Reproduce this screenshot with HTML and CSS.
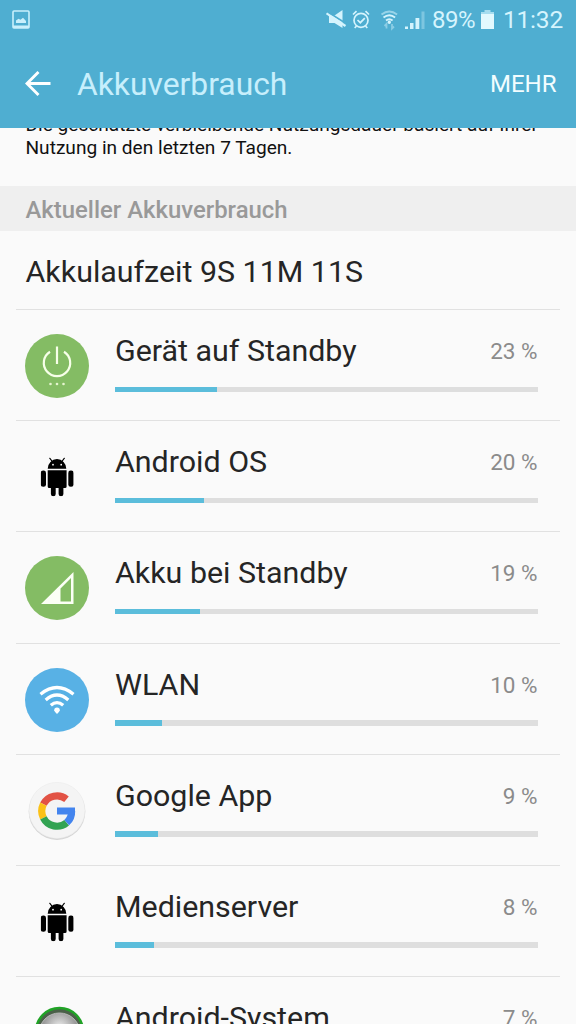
FILE: index.html
```html
<!DOCTYPE html>
<html lang="de">
<head>
<meta charset="utf-8">
<title>Akkuverbrauch</title>
<link rel="stylesheet" href="styles.css">
</head>
<body>
<svg class="defs" width="0" height="0" aria-hidden="true">
  <symbol id="android" viewBox="0 0 33 39">
    <path d="M7 11.2a9.3 9.6 0 0 1 18.6 0zM7 12.7h18.9V29q0 1.6-1.6 1.6h-1.6v5.8a2.4 2.4 0 0 1-4.8 0v-5.8H15v5.8a2.4 2.4 0 0 1-4.8 0v-5.8H8.5Q7 30.600 7 29z"/>
    <rect x="0" y="13" width="5.300" height="16.300" rx="2.400"/>
    <rect x="27.600" y="13" width="5.300" height="16.300" rx="2.400"/>
    <path d="M9 .6l3 4M23.700 .6l-3 4" stroke="#000" stroke-width="1.100" stroke-linecap="round"/>
    <circle cx="12.300" cy="7.200" r=".9" fill="#fafafa"/><circle cx="20.500" cy="7.200" r=".9" fill="#fafafa"/>
  </symbol>
</svg>
<div class="screen">
  <header class="header">
    <div class="status">
      <svg class="shot" width="18" height="19" viewBox="0 0 18 19"><rect x="1" y="1" width="16" height="17" rx="1" fill="none" stroke="#c9f0fc" stroke-width="1.600"/><path d="M1 15.500h16v2.500H1zM4 13v-2.500l2.500-1.800 2 1 2.500-2 3 3.300v2z" fill="#c9f0fc"/></svg>
      <svg class="indicators" width="100" height="22" viewBox="0 0 100 22">
        <g fill="#d5f4fd" stroke="#d5f4fd">
          <path d="M3 6.500h5.500l8-5.500v18L8.500 14H3z" stroke="none"/>
          <path d="M1 2.500L20 14.500" stroke="#4faed1" stroke-width="1.600"/>
          <path d="M.5 4.300L19.500 17" stroke-width="2.200"/>
        </g>
        <g fill="none" stroke="#d5f4fd" stroke-width="1.700">
          <circle cx="35" cy="11.300" r="7"/><path d="M31.500 11l2.800 2.700 4.500-4.500M27 5.500l3.500-3.300M43 5.500l-3.500-3.300M30.500 17l-1.800 2M39.500 17l1.800 2"/>
        </g>
        <g fill="none" stroke="#d5f4fd" stroke-width="1.800">
          <path d="M55.500 5.500q7.800-6 15.600 0" opacity=".55"/><path d="M57.500 8.500q5.800-4.600 11.600 0M60 11.500q3.300-2.600 6.600 0"/>
          <circle cx="63.300" cy="13.300" r=".8" fill="#d5f4fd"/>
          <path d="M60.500 19.500v-4.500l-2 2M66 15v4.500l2-2" opacity=".45"/>
        </g>
        <g fill="#d5f4fd"><path d="M79 17.500h3v2.500h-3zM84 14h3.500v6h-3.500zM89.500 9h3.800v11h-3.800z"/><path d="M95.500 2.500h3V20h-3z" opacity=".35"/></g>
      </svg>
      <span class="level">89%</span>
      <svg class="battery" width="13" height="19" viewBox="0 0 13 19"><path d="M3.500 0h6v2H13v17H0V2h3.500z" fill="#a7ddef"/><path d="M0 4h13v15H0z" fill="#e3f9fe"/></svg>
      <span class="clock">11:32</span>
    </div>
    <div class="bar">
      <svg class="back" width="26" height="26" viewBox="0 0 26 26"><path d="M25.500 12.500H2M13.500 1L2 12.500l11.500 11.500" fill="none" stroke="#fff" stroke-width="2.900"/></svg>
      <h1 class="title">Akkuverbrauch</h1>
      <span class="more">MEHR</span>
    </div>
  </header>
  <main class="content">
    <div class="note"><p class="note-text">Die geschätzte verbleibende Nutzungsdauer basiert auf Ihrer<br>Nutzung in den letzten 7 Tagen.</p></div>
    <h2 class="section">Aktueller Akkuverbrauch</h2>
    <div class="runtime"><span>Akkulaufzeit 9S 11M 11S</span></div>
    <ul class="list">
      <li class="row">
        <svg class="icon" viewBox="0 0 64 64"><circle cx="32" cy="32" r="32" fill="#84bc64"/><path d="M25 17.700a13.200 13.200 0 1 0 14 0M32 12.500v17.500" fill="none" stroke="#f7ffe9" stroke-width="2.200"/><g fill="#e5f5cf"><circle cx="25.500" cy="50" r="1.300"/><circle cx="32" cy="50" r="1.300"/><circle cx="38.500" cy="50" r="1.300"/></g></svg>
        <div class="info"><div class="line"><span class="name">Gerät auf Standby</span><span class="pct">23 %</span></div><div class="track"><div class="fill" style="width:24.100%"></div></div></div>
      </li>
      <li class="row">
        <svg class="icon" viewBox="0 0 64 64"><use href="#android" x="15.700" y="12.500" width="33" height="39"/></svg>
        <div class="info"><div class="line"><span class="name">Android OS</span><span class="pct">20 %</span></div><div class="track"><div class="fill" style="width:21.100%"></div></div></div>
      </li>
      <li class="row">
        <svg class="icon" viewBox="0 0 64 64"><circle cx="32" cy="32" r="32" fill="#84bc64"/><path fill-rule="evenodd" d="M48.500 16v32H16zM35.500 32.500V45.500H46V22z" fill="#fbfff5"/></svg>
        <div class="info"><div class="line"><span class="name">Akku bei Standby</span><span class="pct">19 %</span></div><div class="track"><div class="fill" style="width:20.100%"></div></div></div>
      </li>
      <li class="row">
        <svg class="icon" viewBox="0 0 64 64"><circle cx="32" cy="32" r="32" fill="#58b1e5"/><g fill="none" stroke="#fff" stroke-width="3.300"><path d="M15.500 26.200q16.500-13.400 33 0M20.700 31.900q11.300-9.800 22.600 0M25.800 37.300q6.200-5.400 12.400 0"/></g><path d="M29.200 42.300a2.800 2.800 0 0 1 5.600 0q0 1.200-2.800 3.700-2.800-2.500-2.800-3.700z" fill="#fff"/></svg>
        <div class="info"><div class="line"><span class="name">WLAN</span><span class="pct">10 %</span></div><div class="track"><div class="fill" style="width:11.100%"></div></div></div>
      </li>
      <li class="row">
        <svg class="icon" viewBox="0 0 64 64"><circle cx="32" cy="32.600" r="28.300" fill="#d5d5d5"/><circle cx="32" cy="31.400" r="28" fill="#f4f4f4" stroke="#e8e8e8" stroke-width=".5"/><g fill="none" stroke-width="7.200"><path d="M41.500 20.200A15.200 15.200 0 0 0 18.400 25.200" stroke="#e25244"/><path d="M18.400 25.200A15.200 15.200 0 0 0 18.400 38.800" stroke="#fbc116"/><path d="M18.400 38.800A15.200 15.200 0 0 0 41.700 43.700" stroke="#32a352"/><path d="M41.700 43.700A15.200 15.200 0 0 0 46.600 32" stroke="#4384ee"/></g><path d="M32 28.500h18v7H32z" fill="#4384ee"/></svg>
        <div class="info"><div class="line"><span class="name">Google App</span><span class="pct">9 %</span></div><div class="track"><div class="fill" style="width:10.100%"></div></div></div>
      </li>
      <li class="row">
        <svg class="icon" viewBox="0 0 64 64"><use href="#android" x="15.700" y="12.500" width="33" height="39"/></svg>
        <div class="info"><div class="line"><span class="name">Medienserver</span><span class="pct">8 %</span></div><div class="track"><div class="fill" style="width:9.200%"></div></div></div>
      </li>
      <li class="row">
        <svg class="icon" viewBox="0 0 64 64"><defs><radialGradient id="orb" cx=".5" cy=".35" r=".65"><stop offset="0" stop-color="#eee"/><stop offset=".5" stop-color="#aaa"/><stop offset="1" stop-color="#686868"/></radialGradient></defs><circle cx="34.500" cy="30.500" r="23.500" fill="#4b6049" stroke="#20a326" stroke-width="2.500"/><circle cx="34.500" cy="32.500" r="20.500" fill="url(#orb)" stroke="#bbb" stroke-width="1"/></svg>
        <div class="info"><div class="line"><span class="name">Android-System</span><span class="pct">7 %</span></div><div class="track"><div class="fill" style="width:8%"></div></div></div>
      </li>
    </ul>
  </main>
</div>
</body>
</html>
```
FILE: styles.css
```css
* { box-sizing: border-box; }
body, h1, h2, p, ul { margin: 0; padding: 0; }
body { font-family: Roboto, "Liberation Sans", sans-serif; background: #fafafa; }
svg { display: block; flex: none; }
.defs { display: none; }
.screen { width: 576px; height: 1024px; overflow: hidden; display: flex; flex-direction: column; }
.header { flex: none; height: 128px; background: #4faed1; }
.status { display: flex; align-items: center; height: 39px; padding: 0 13px 0 12px; color: #d5f4fd; font-size: 24px; white-space: nowrap; }
.shot { margin-top: -1px; }
.indicators { margin-left: 296px; }
.level { margin-left: 6px; width: 44px; font-size: 24px; letter-spacing: -.5px; }
.battery { margin-left: 5px; }
.clock { margin-left: auto; font-size: 24.500px; letter-spacing: -.2px; }
.bar { display: flex; align-items: center; height: 89px; padding: 0 19.500px 0 25px; }
.title { margin-left: 26px; font-size: 31.800px; font-weight: 400; line-height: 91px; padding-top: 1px; color: #c7effc; }
.more { margin-left: auto; font-size: 24px; color: #f2fdff; }
.content { flex: 1; min-height: 0; overflow: hidden; }
.note { height: 58px; padding-left: 25.500px; overflow: hidden; font-size: 19.100px; line-height: 23px; color: #111; white-space: nowrap; }
.note-text { margin-top: -15px; }
.section { height: 45px; padding-left: 25.500px; background: #efefef; color: #999; font-size: 23.900px; font-weight: 500; line-height: 48px; }
.runtime { height: 78px; padding-left: 25.500px; font-size: 30.400px; line-height: 82px; color: #252525; }
.list { list-style: none; }
.row { display: flex; height: 111.200px; margin: 0 16px; padding: 24px 22.500px 0 9.300px; border-top: 1px solid #e1e1e1; }
.icon { width: 64px; height: 64px; }
.info { flex: 1; margin-left: 25.700px; }
.line { display: flex; justify-content: space-between; height: 52.500px; line-height: 34.600px; }
.name { font-size: 30.400px; color: #252525; }
.pct { font-size: 22.500px; line-height: 34px; color: #8b8b8b; }
.track { height: 5.500px; background: #dedede; }
.fill { height: 100%; background: #5bbddb; }
```
